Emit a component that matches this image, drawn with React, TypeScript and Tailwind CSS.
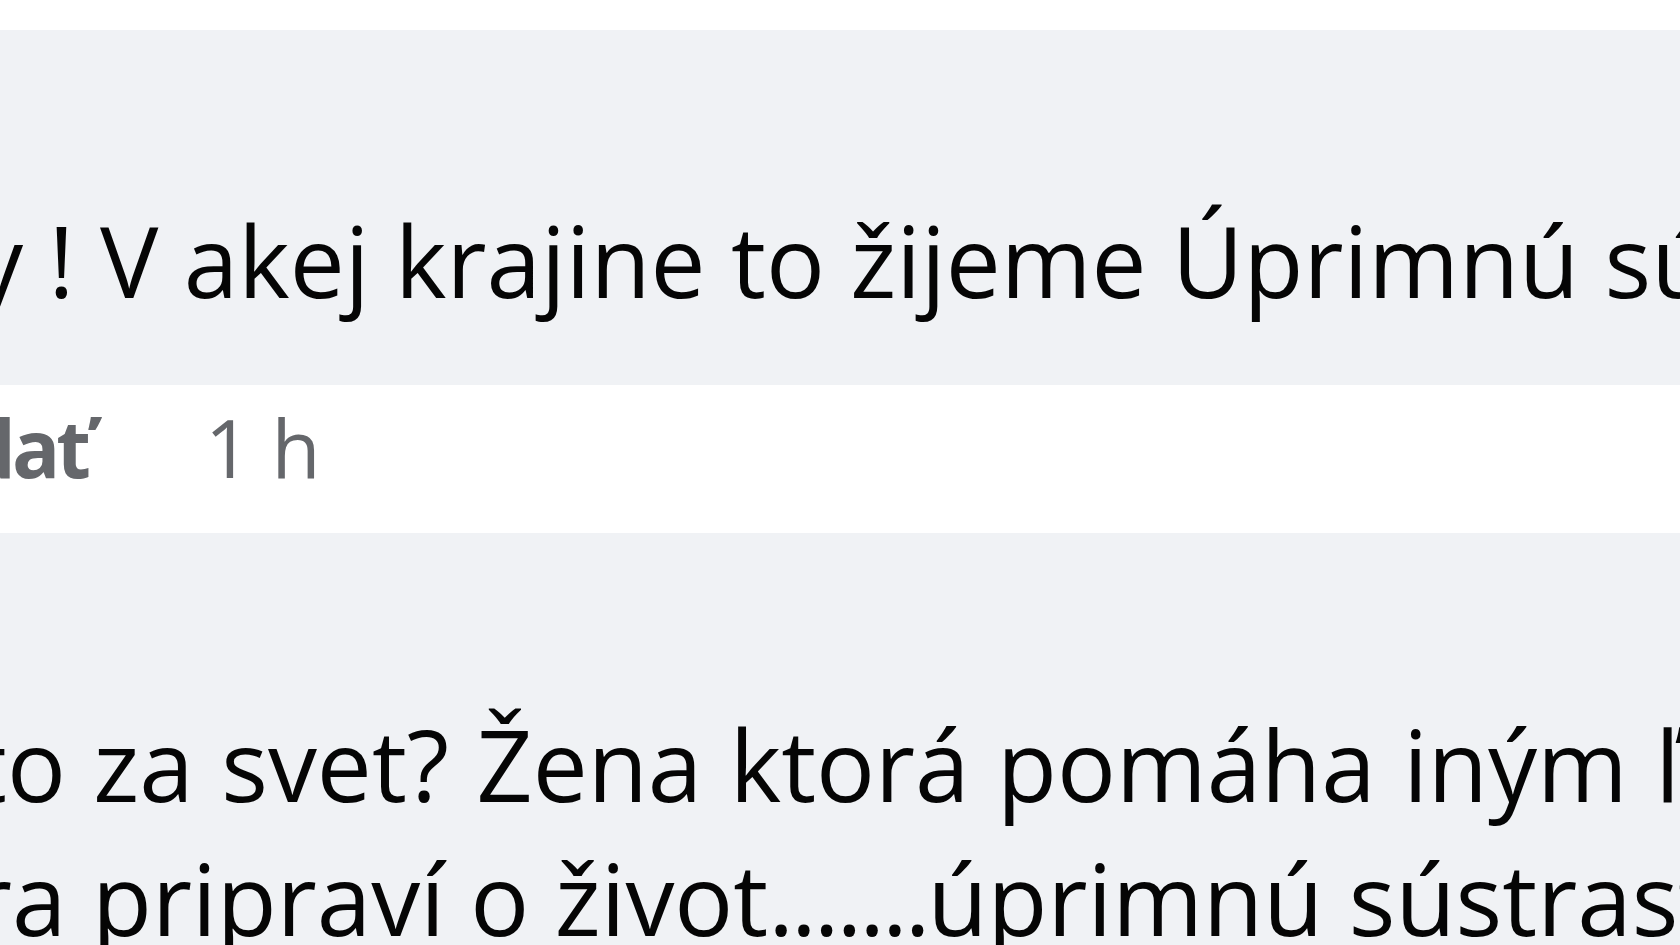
import { FC, ReactNode } from "react";

const CommentLine: FC<{ children: ReactNode; className: string }> = (props) => {
  return (
    <p className={`whitespace-nowrap text-[98px] leading-[134px] text-[#050505] ${props.className}`}>
      {props.children}
    </p>
  );
};

const App: FC = () => {
  return (
    <div className="flex flex-col h-screen w-full overflow-hidden bg-white font-['Open_Sans',sans-serif]">
      <div className="h-[30px] shrink-0 bg-white" />

      {/* first bubble */}
      <div className="h-[355px] shrink-0 bg-[#f0f2f5] pt-[163px]">
        <CommentLine className="ml-[-26px]">y ! V akej krajine to žijeme Úprimnú sústrasť</CommentLine>
      </div>

      {/* actions row */}
      <div className="flex items-start h-[148px] shrink-0 bg-white pt-[7px] text-[80px] leading-[110px] text-[#65676b]">
        <div className="flex justify-end w-[87px] shrink-0">
          <span className="font-bold whitespace-nowrap tracking-[-4px]">Odpovedať</span>
        </div>
        <span className="ml-[118px] whitespace-nowrap">1 h</span>
      </div>

      {/* second bubble */}
      <div className="flex-1 bg-[#f0f2f5] pt-[164px]">
        <CommentLine className="ml-[-28px] [word-spacing:2px]">
          to za svet? Žena ktorá pomáha iným ľuďom a niekto
        </CommentLine>
        <CommentLine className="ml-[-28px]">
          ra pripraví o život<span className="tracking-[-3px]">.......</span>úprimnú sústrasť rodine
        </CommentLine>
      </div>
    </div>
  );
};

export default App;
